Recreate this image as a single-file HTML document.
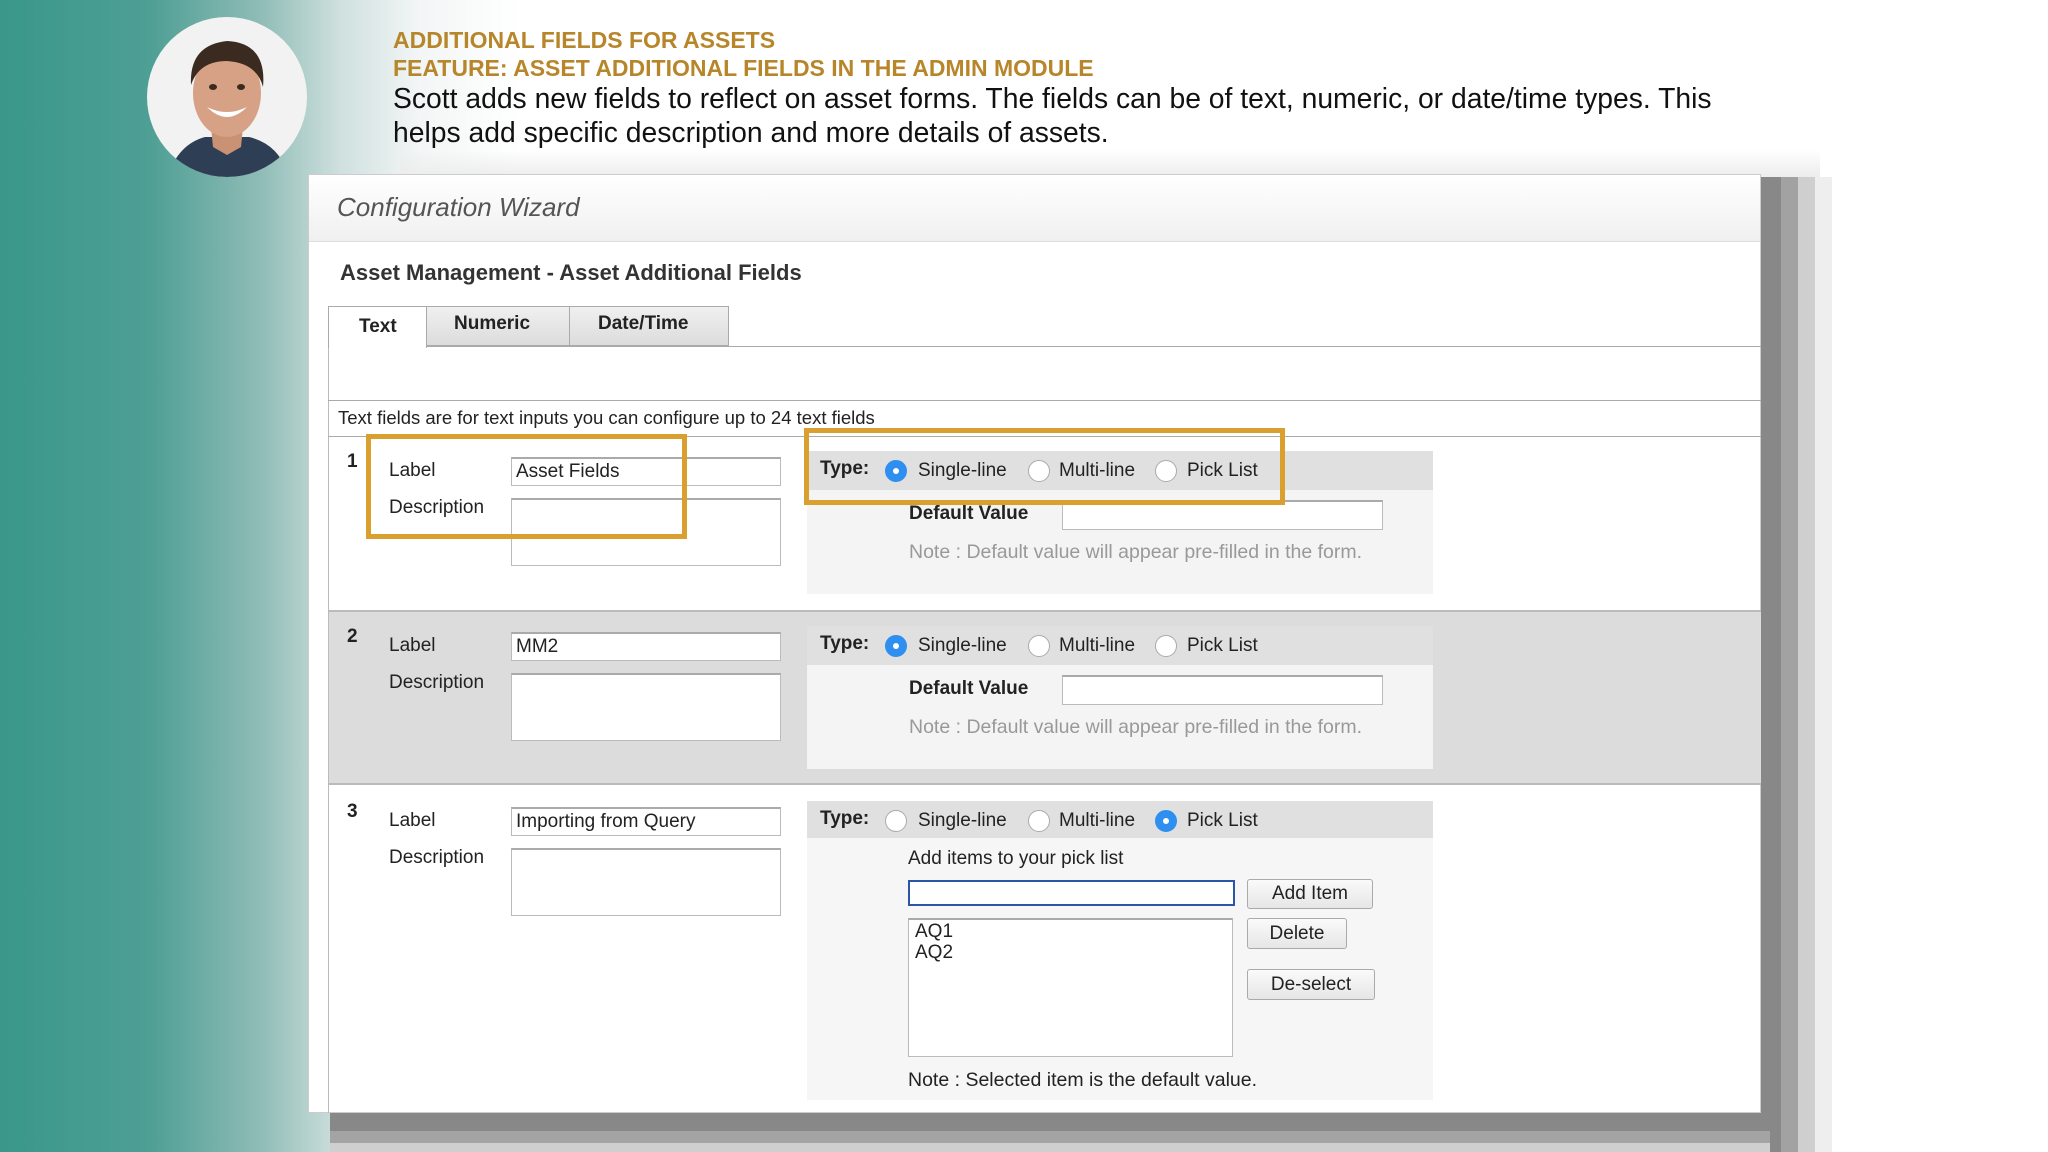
<!DOCTYPE html>
<html><head><meta charset="utf-8"><style>
*{margin:0;padding:0;box-sizing:border-box}
body{width:2048px;height:1152px;overflow:hidden;position:relative;font-family:"Liberation Sans",Arial,sans-serif;background:#fff}
.a{position:absolute}
.bg{left:0;top:0;width:2048px;height:1152px;background:linear-gradient(90deg,#3a978a 0px,#4e9f95 150px,#8fbcb6 260px,#cfe0de 340px,#f3f6f6 420px,#fff 520px)}
.gold{color:#b8862a;font-weight:bold;font-size:23px;left:393px;white-space:nowrap}
.body{color:#111;font-size:28.3px;left:393px;white-space:nowrap}
.t{font-size:19px;color:#222;white-space:nowrap}
.b{font-weight:bold}
.inp{background:#fff;border:1px solid #bbb;border-top:2px solid #aaa}
.rad{width:22px;height:22px;border-radius:50%;background:#fff;border:1px solid #aaa}
.rad.on{background:#2f8ff0;border-color:#2f8ff0}
.rad.on:after{content:"";position:absolute;left:7px;top:7px;width:6px;height:6px;border-radius:50%;background:#fff}
.btn{background:linear-gradient(#fafafa,#e6e6e6);border:1px solid #aaa;border-radius:3px;font-size:19px;text-align:center;color:#222}
.ob{border:5px solid #d9a030}
</style></head><body>
<div class="a bg"></div>
<div class="a" style="left:400px;top:150px;width:1420px;height:28px;background:linear-gradient(180deg,rgba(240,240,240,0),#ececec)"></div>
<svg class="a" style="left:145px;top:15px" width="164" height="164" viewBox="0 0 164 164">
<defs><clipPath id="c"><circle cx="82" cy="82" r="80"/></clipPath></defs>
<circle cx="82" cy="82" r="80" fill="#f2f2f2"/>
<g clip-path="url(#c)">
<path d="M20 170 Q30 130 60 122 L104 122 Q138 130 146 170Z" fill="#2e3f55"/>
<path d="M66 112 L98 112 L96 132 L82 140 L68 132Z" fill="#c99274"/>
<ellipse cx="82" cy="78" rx="34" ry="44" fill="#d6a184"/>
<path d="M46 70 Q44 30 82 26 Q122 28 118 72 Q112 48 82 46 Q54 46 46 70Z" fill="#3b2a20"/>
<path d="M62 92 Q82 112 102 92 Q82 102 62 92Z" fill="#fff"/>
<ellipse cx="68" cy="72" rx="4" ry="3" fill="#3a2a20"/><ellipse cx="96" cy="72" rx="4" ry="3" fill="#3a2a20"/>
</g></svg>
<div class="a gold" style="top:27px">ADDITIONAL FIELDS FOR ASSETS</div>
<div class="a gold" style="top:55px">FEATURE: ASSET ADDITIONAL FIELDS IN THE ADMIN MODULE</div>
<div class="a body" style="top:82px">Scott adds new fields to reflect on asset forms. The fields can be of text, numeric, or date/time types. This</div>
<div class="a body" style="top:116px">helps add specific description and more details of assets.</div>
<div class="a" style="left:1761px;top:177px;width:71px;height:975px;background:linear-gradient(90deg,#888 0,#888 20px,#a2a2a2 20px,#a2a2a2 37px,#cfcfcf 37px,#cfcfcf 54px,#eee 54px)"></div>
<div class="a" style="left:330px;top:1113px;width:1440px;height:39px;background:linear-gradient(180deg,#888 0,#888 18px,#a4a4a4 18px,#a4a4a4 30px,#cfcfcf 30px)"></div>
<div class="a" style="left:308px;top:174px;width:1453px;height:939px;background:#fff;border:1px solid #ccc"></div>
<div class="a" style="left:309px;top:175px;width:1451px;height:67px;background:linear-gradient(#fff,#f0f0f0);border-bottom:1px solid #ddd"></div>
<div class="a" style="left:337px;top:192px;font-size:26px;font-style:italic;color:#555">Configuration Wizard</div>
<div class="a b" style="left:340px;top:260px;font-size:22px;color:#333">Asset Management - Asset Additional Fields</div>
<div class="a" style="left:328px;top:346px;width:1433px;height:767px;border-left:1px solid #bbb;border-top:1px solid #aaa"></div>
<div class="a" style="left:426px;top:306px;width:303px;height:40px;background:linear-gradient(#f0f0f0,#dcdcdc);border:1px solid #aaa"></div>
<div class="a" style="left:569px;top:306px;width:1px;height:40px;background:#aaa"></div>
<div class="a" style="left:328px;top:306px;width:99px;height:42px;background:#fff;border:1px solid #aaa;border-bottom:none"></div>
<div class="a t b" style="left:359px;top:316px">Text</div>
<div class="a t b" style="left:454px;top:313px">Numeric</div>
<div class="a t b" style="left:598px;top:313px">Date/Time</div>
<div class="a" style="left:328px;top:400px;width:1433px;height:1px;background:#aaa"></div>
<div class="a t" style="left:338px;top:407px;font-size:18.5px">Text fields are for text inputs you can configure up to 24 text fields</div>
<div class="a" style="left:328px;top:436px;width:1433px;height:1px;background:#aaa"></div>
<div class="a" style="left:329px;top:610px;width:1432px;height:175px;background:#dcdcdc;border-top:2px solid #bbb;border-bottom:2px solid #bbb"></div>

<div class="a t b" style="left:347px;top:451px">1</div>
<div class="a t" style="left:389px;top:460px">Label</div>
<div class="a t" style="left:389px;top:497px">Description</div>
<div class="a inp" style="left:511px;top:457px;width:270px;height:29px"></div>
<div class="a t" style="left:516px;top:461px">Asset Fields</div>
<div class="a inp" style="left:511px;top:498px;width:270px;height:68px"></div>
<div class="a" style="left:807px;top:451px;width:626px;height:143px;background:#f4f4f4"></div>
<div class="a" style="left:807px;top:451px;width:626px;height:39px;background:#e0e0e0"></div>
<div class="a t b" style="left:820px;top:458px">Type:</div>
<div class="a rad on" style="left:885px;top:460px"></div><div class="a t" style="left:918px;top:460px">Single-line</div>
<div class="a rad" style="left:1028px;top:460px"></div><div class="a t" style="left:1059px;top:460px">Multi-line</div>
<div class="a rad" style="left:1155px;top:460px"></div><div class="a t" style="left:1187px;top:460px">Pick List</div>
<div class="a t b" style="left:909px;top:503px">Default Value</div>
<div class="a inp" style="left:1062px;top:500px;width:321px;height:30px"></div>
<div class="a t" style="left:909px;top:541px;color:#999;font-size:19.5px">Note : Default value will appear pre-filled in the form.</div>
<div class="a ob" style="left:366px;top:434px;width:321px;height:105px"></div>
<div class="a ob" style="left:804px;top:428px;width:481px;height:77px"></div>

<div class="a t b" style="left:347px;top:626px">2</div>
<div class="a t" style="left:389px;top:635px">Label</div>
<div class="a t" style="left:389px;top:672px">Description</div>
<div class="a inp" style="left:511px;top:632px;width:270px;height:29px"></div>
<div class="a t" style="left:516px;top:636px">MM2</div>
<div class="a inp" style="left:511px;top:673px;width:270px;height:68px"></div>
<div class="a" style="left:807px;top:626px;width:626px;height:143px;background:#f4f4f4"></div>
<div class="a" style="left:807px;top:626px;width:626px;height:39px;background:#e0e0e0"></div>
<div class="a t b" style="left:820px;top:633px">Type:</div>
<div class="a rad on" style="left:885px;top:635px"></div><div class="a t" style="left:918px;top:635px">Single-line</div>
<div class="a rad" style="left:1028px;top:635px"></div><div class="a t" style="left:1059px;top:635px">Multi-line</div>
<div class="a rad" style="left:1155px;top:635px"></div><div class="a t" style="left:1187px;top:635px">Pick List</div>
<div class="a t b" style="left:909px;top:678px">Default Value</div>
<div class="a inp" style="left:1062px;top:675px;width:321px;height:30px"></div>
<div class="a t" style="left:909px;top:716px;color:#999;font-size:19.5px">Note : Default value will appear pre-filled in the form.</div>

<div class="a t b" style="left:347px;top:801px">3</div>
<div class="a t" style="left:389px;top:810px">Label</div>
<div class="a t" style="left:389px;top:847px">Description</div>
<div class="a inp" style="left:511px;top:807px;width:270px;height:29px"></div>
<div class="a t" style="left:516px;top:811px">Importing from Query</div>
<div class="a inp" style="left:511px;top:848px;width:270px;height:68px"></div>
<div class="a" style="left:807px;top:801px;width:626px;height:299px;background:#f6f6f6"></div>
<div class="a" style="left:807px;top:801px;width:626px;height:37px;background:#e0e0e0"></div>
<div class="a t b" style="left:820px;top:808px">Type:</div>
<div class="a rad" style="left:885px;top:810px"></div><div class="a t" style="left:918px;top:810px">Single-line</div>
<div class="a rad" style="left:1028px;top:810px"></div><div class="a t" style="left:1059px;top:810px">Multi-line</div>
<div class="a rad on" style="left:1155px;top:810px"></div><div class="a t" style="left:1187px;top:810px">Pick List</div>
<div class="a t" style="left:908px;top:848px">Add items to your pick list</div>
<div class="a" style="left:908px;top:880px;width:327px;height:26px;background:#fff;border:2px solid #2b55a8"></div>
<div class="a btn" style="left:1247px;top:879px;width:126px;height:30px;line-height:28px">Add Item</div>
<div class="a inp" style="left:908px;top:918px;width:325px;height:139px"></div>
<div class="a t" style="left:915px;top:921px">AQ1</div>
<div class="a t" style="left:915px;top:942px">AQ2</div>
<div class="a btn" style="left:1247px;top:918px;width:100px;height:31px;line-height:29px">Delete</div>
<div class="a btn" style="left:1247px;top:969px;width:128px;height:31px;line-height:29px">De-select</div>
<div class="a t" style="left:908px;top:1069px;font-size:19.5px">Note : Selected item is the default value.</div>
</body></html>
